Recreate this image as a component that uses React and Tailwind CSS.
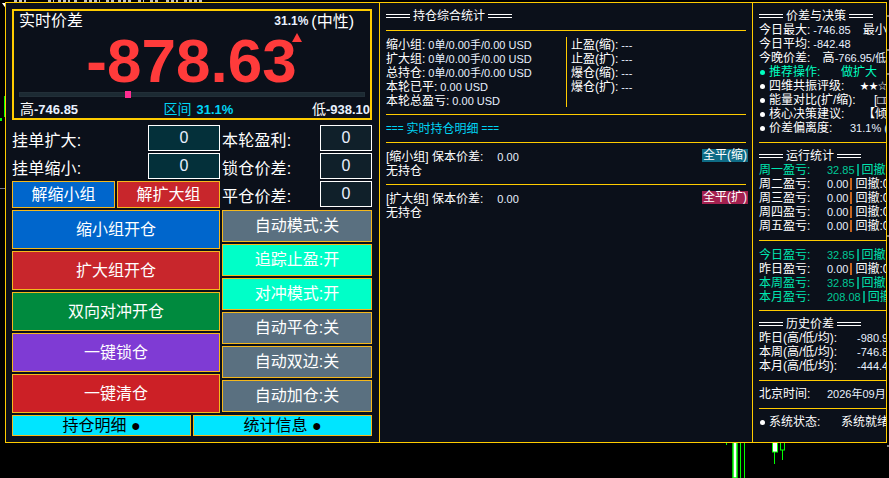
const chipBtn = 'flex items-center justify-center border border-[#f5b81c] text-white text-[16px]';

function DoubleRule({ className = 'w-[24px]' }) {
  return <span className={`inline-block h-[4px] border-y border-white ${className}`} />;
}

function SectionTitle({ title }) {
  return (
    <div className="flex items-center gap-[3px] h-[14px] text-white text-[12px] leading-[14px]">
      <DoubleRule />
      <span>{title}</span>
      <DoubleRule />
    </div>
  );
}

function Hr({ className = '' }) {
  return <div className={`h-px bg-[#ffcc00] ${className}`} />;
}

function Line({ children, className = 'text-white' }) {
  return <div className={`flex h-[14px] leading-[14px] whitespace-nowrap ${className}`}>{children}</div>;
}

function Num({ children, className = 'text-[#e8f1ff]' }) {
  return <span className={`text-[11px] ${className}`}>{children}</span>;
}

function Field({ label, bg, width }) {
  return (
    <div className="flex justify-between items-center h-[26px]">
      <span className="text-white text-[16px] pt-[5px] tracking-[0.2px]">{label}</span>
      <div className={`${width} ${bg} h-full border border-white flex items-center justify-center text-[#e8f1ff] text-[16px]`}>0</div>
    </div>
  );
}

function Chart() {
  return (
    <svg className="absolute inset-0" width="889" height="478">
      <path d="M2 3h7l-3.500 5z" fill="#fff" />
      <rect x="4" y="96" width="2" height="21" fill="#00ff00" />
      <rect x="0" y="118" width="2" height="3" fill="#00ff00" />
      <rect x="0" y="188" width="5" height="1" fill="#778" />
      <path d="M14 1h12M48 1h6M58 1h12M74 1h4M84 1h16M106 1h8M118 1h14M138 1h6M150 1h10M166 1h12M184 1h20" stroke="#fff" strokeWidth="1.500" strokeDasharray="3 2" />
      <rect x="726" y="442" width="1" height="3" fill="#00ff00" />
      <rect x="733" y="442" width="4" height="36" fill="#fff" stroke="#00ff00" strokeWidth="1.500" />
      <rect x="740" y="442" width="1" height="36" fill="#00ff00" />
      <rect x="744" y="442" width="1" height="36" fill="#00ff00" />
      <rect x="772.500" y="442" width="5" height="10" fill="#fff" stroke="#00ff00" />
      <rect x="774" y="452" width="1" height="12" fill="#00ff00" />
      <rect x="780.500" y="442" width="4" height="8" fill="#000" stroke="#00ff00" />
      <rect x="782" y="450" width="1" height="10" fill="#00ff00" />
      <path d="M887 16h2M887 50h2M887 74h2M887 236h2M887 446h2" stroke="#fff" />
    </svg>
  );
}

function PricePanel() {
  return (
    <div className="relative w-[360px] h-[111px] border-2 border-[#ffcc00] flex flex-col">
      <div className="flex justify-between items-center h-[18px] mt-px pl-[5px] pr-[16px] text-white">
        <span className="text-[16px]">实时价差</span>
        <span className="flex items-center gap-[3px] text-[16px]">
          <b className="text-[12px] text-[#e8f1ff]">31.1%</b>
          <span className="pt-px">(中性)</span>
        </span>
      </div>
      <div className="h-[60px] flex items-center justify-center pr-[1px] pt-[1px] text-[#ff3b3b] font-bold text-[62px] leading-[60px]">-878.63</div>
      <span className="absolute left-[278px] top-[22px] w-0 h-0 border-x-[5px] border-x-transparent border-b-[9px] border-b-[#ff3b3b]" />
      <div className="relative mx-[5px] h-[5px] mt-[2px] bg-[#1c2a33] border border-[#222f38]">
        <span className="absolute left-[105px] top-[-2px] w-[6px] h-[7px] bg-[#ff2d92]" />
      </div>
      <div className="flex justify-between items-center h-[17px] mt-[4px] pl-[6px] text-white text-[14px]">
        <span>高<b className="text-[13px] text-[#e8f1ff]">-746.85</b></span>
        <span className="text-[#00d5f5] ml-[7px]">区间 <b className="text-[13px] pl-[1px]">31.1%</b></span>
        <span>低<b className="text-[13px] text-[#e8f1ff]">-938.10</b></span>
      </div>
    </div>
  );
}

function LeftColumn() {
  const big = [
    ['缩小组开仓', 'bg-[#0066cc]'],
    ['扩大组开仓', 'bg-[#c8262c]'],
    ['双向对冲开仓', 'bg-[#008a3e]'],
    ['一键锁仓', 'bg-[#7f3bd4]'],
    ['一键清仓', 'bg-[#cc2026]'],
  ];
  const toggles = [
    ['自动模式:关', 'bg-[#5a7080]'],
    ['追踪止盈:开', 'bg-[#00ffc8]'],
    ['对冲模式:开', 'bg-[#00ffc8]'],
    ['自动平仓:关', 'bg-[#5a7080]'],
    ['自动双边:关', 'bg-[#5a7080]'],
    ['自动加仓:关', 'bg-[#5a7080]'],
  ];
  return (
    <div className="w-[374px] shrink-0 border-r border-[#ffcc00] pl-[6px] pt-[6px]">
      <PricePanel />
      <div className="flex gap-[2px] w-[360px] mt-[5px]">
        <div className="w-[208px] flex flex-col gap-[2px]">
          <Field label="挂单扩大:" bg="bg-[#04303a]" width="w-[72px]" />
          <Field label="挂单缩小:" bg="bg-[#04303a]" width="w-[72px]" />
          <div className="flex gap-[2px] h-[27px]">
            <div className={`${chipBtn} flex-1 bg-[#0066cc]`}>解缩小组</div>
            <div className={`${chipBtn} flex-1 bg-[#c8262c]`}>解扩大组</div>
          </div>
        </div>
        <div className="flex-1 flex flex-col gap-[2px]">
          <Field label="本轮盈利:" bg="bg-[#10202a]" width="w-[52px]" />
          <Field label="锁仓价差:" bg="bg-[#10202a]" width="w-[52px]" />
          <Field label="平仓价差:" bg="bg-[#10202a]" width="w-[52px]" />
        </div>
      </div>
      <div className="flex gap-[2px] w-[360px] mt-[2px]">
        <div className="w-[208px] flex flex-col gap-[2px]">
          {big.map(([text, bg]) => (
            <div key={text} className={`${chipBtn} ${bg} h-[39px]`}>{text}</div>
          ))}
        </div>
        <div className="flex-1 flex flex-col gap-[2px]">
          {toggles.map(([text, bg]) => (
            <div key={text} className={`${chipBtn} ${bg} h-[32px]`}>{text}</div>
          ))}
        </div>
      </div>
      <div className="flex gap-[2px] w-[360px] mt-[2px]">
        <div className={`${chipBtn} flex-1 h-[21px] bg-[#00e5ff]`}><span className="text-black">持仓明细 ●</span></div>
        <div className={`${chipBtn} flex-1 h-[21px] bg-[#00e5ff]`}><span className="text-black">统计信息 ●</span></div>
      </div>
    </div>
  );
}

function GroupBlock({ name, button, bg }) {
  return (
    <div className="relative h-[41px] pt-[7px]">
      <Line>
        <span>{name} 保本价差:</span>
        <Num className="ml-[14px] text-[#e8f1ff]">0.00</Num>
      </Line>
      <Line>无持仓</Line>
      <span className={`absolute left-[316px] top-[6px] w-[46px] h-[13px] ${bg} text-white text-[12px] leading-[13px] text-center`}>{button}</span>
    </div>
  );
}

function MiddleColumn() {
  const rows = [
    ['缩小组:', '0单/0.00手/0.00 USD'],
    ['扩大组:', '0单/0.00手/0.00 USD'],
    ['总持仓:', '0单/0.00手/0.00 USD'],
    ['本轮已平:', '0.00 USD'],
    ['本轮总盈亏:', '0.00 USD'],
  ];
  const stops = ['止盈(缩):', '止盈(扩):', '爆仓(缩):', '爆仓(扩):'];
  return (
    <div className="w-[373px] shrink-0 border-r border-[#ffcc00] px-[6px] pt-[6px] text-[12px] text-white">
      <SectionTitle title="持仓综合统计" />
      <Hr className="mt-[7px] w-[360px]" />
      <div className="flex mt-[6px] h-[70px]">
        <div className="w-[180px] pt-px">
          {rows.map(([label, value]) => (
            <Line key={label}>
              <span>{label}</span>
              <Num className="text-[#e8f1ff] ml-[3px]">{value}</Num>
            </Line>
          ))}
        </div>
        <div className="border-l border-[#ffcc00] pl-[4px] pt-px">
          {stops.map((label) => (
            <Line key={label}>
              <span>{label}</span>
              <Num className="ml-[3px] text-[#e8f1ff]">---</Num>
            </Line>
          ))}
        </div>
      </div>
      <Hr className="mt-[7px] w-[360px]" />
      <div className="h-[27px] flex items-center gap-[3px] text-[#00d5f5] text-[12px]">
        <span className="text-[10px]">===</span>
        <span>实时持仓明细</span>
        <span className="text-[10px]">===</span>
      </div>
      <Hr className="w-[360px]" />
      <GroupBlock name="[缩小组]" button="全平(缩)" bg="bg-[#0e6b85]" />
      <Hr className="w-[360px]" />
      <GroupBlock name="[扩大组]" button="全平(扩)" bg="bg-[#a3204f]" />
    </div>
  );
}

function Dot({ className = 'bg-white' }) {
  return <span className={`w-[5px] h-[5px] rounded-full ${className} mt-[5px] ml-px mr-[4px] shrink-0`} />;
}

function Pnl({ label, value, green }) {
  return (
    <Line className={green ? 'text-[#00e6b0]' : 'text-white'}>
      <span className="w-[68px] shrink-0">{label}</span>
      <Num className={green ? 'text-[#00c896]' : 'text-[#e8f1ff]'}>{value}</Num>
      <span className={`ml-[2px] w-[2px] h-[12px] mt-px shrink-0 ${green ? 'bg-[#00a080]' : 'bg-[#c8641e]'}`} />
      <span className="ml-[3px]">回撤:0</span>
    </Line>
  );
}

function RightColumn() {
  return (
    <div className="flex-1 min-w-0 overflow-hidden pl-[6px] pt-[6px] text-[12px] text-white">
      <SectionTitle title="价差与决策" />
      <Line>
        <span>今日最大:</span>
        <Num className="ml-[3px] text-[#e8f1ff]">-746.85</Num>
        <span className="ml-[12px]">最小值</span>
      </Line>
      <Line>
        <span>今日平均:</span>
        <Num className="ml-[3px] text-[#e8f1ff]">-842.48</Num>
      </Line>
      <Line>
        <span className="w-[72px]">今晚价差:</span>
        <span>高<Num>-766.95/低</Num></span>
      </Line>
      <Line className="text-[#00ffc0]">
        <Dot className="bg-[#00ffc0]" />
        <span className="w-[72px] shrink-0">推荐操作:</span>
        <span>做扩大</span>
      </Line>
      <Line>
        <Dot />
        <span className="w-[91px] shrink-0">四维共振评级:</span>
        <span className="text-[9px]">★★☆☆</span>
      </Line>
      <Line>
        <Dot />
        <span className="w-[105px] shrink-0">能量对比(扩/缩):</span>
        <span>[□□□</span>
      </Line>
      <Line>
        <Dot />
        <span className="w-[94px] shrink-0">核心决策建议:</span>
        <span>【倾向</span>
      </Line>
      <Line>
        <Dot />
        <span className="w-[81px] shrink-0">价差偏离度:</span>
        <Num>31.1% (中</Num>
      </Line>
      <Hr className="mt-[7px]" />
      <div className="mt-[6px]"><SectionTitle title="运行统计" /></div>
      <Pnl label="周一盈亏:" value="32.85" green />
      <Pnl label="周二盈亏:" value="0.00" />
      <Pnl label="周三盈亏:" value="0.00" />
      <Pnl label="周四盈亏:" value="0.00" />
      <Pnl label="周五盈亏:" value="0.00" />
      <Hr className="mt-[7px]" />
      <div className="mt-[7px]">
        <Pnl label="今日盈亏:" value="32.85" green />
        <Pnl label="昨日盈亏:" value="0.00" />
        <Pnl label="本周盈亏:" value="32.85" green />
        <Pnl label="本月盈亏:" value="208.08" green />
      </div>
      <Hr className="mt-[6px]" />
      <div className="mt-[6px]"><SectionTitle title="历史价差" /></div>
      {[['昨日', '-980.9'], ['本周', '-746.8'], ['本月', '-444.4']].map(([day, value]) => (
        <Line key={day}>
          <span className="w-[98px] shrink-0">{day}(高/低/均):</span>
          <Num>{value}</Num>
        </Line>
      ))}
      <Hr className="mt-[7px]" />
      <Line className="text-white mt-[6px]">
        <span className="w-[68px] shrink-0">北京时间:</span>
        <Num>2026年09月</Num>
      </Line>
      <Hr className="mt-[7px]" />
      <Line className="text-white mt-[6px]">
        <Dot />
        <span className="w-[72px] shrink-0">系统状态:</span>
        <span>系统就绪</span>
      </Line>
    </div>
  );
}

export default function App() {
  return (
    <div className="relative h-[478px] w-[889px] overflow-hidden bg-black font-['Liberation_Sans','Noto_Sans_CJK_SC',sans-serif]">
      <Chart />
      <div className="relative ml-[5px] mt-[2px] w-[882px] h-[441px] flex border border-[#ffcc00] bg-[#0b101a]">
        <LeftColumn />
        <MiddleColumn />
        <RightColumn />
      </div>
    </div>
  );
}
